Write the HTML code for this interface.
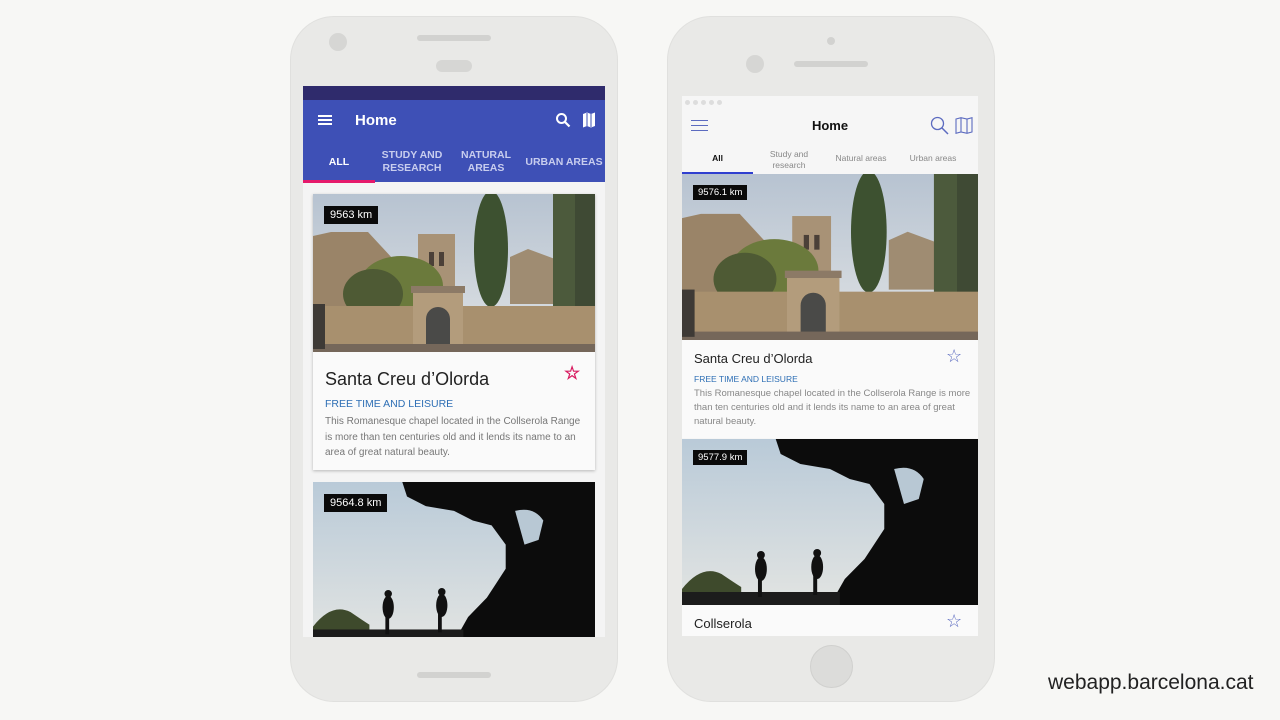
<!DOCTYPE html>
<html><head><meta charset="utf-8"><style>
*{margin:0;padding:0;box-sizing:border-box}
body{width:1280px;height:720px;background:#f7f7f5;position:relative;overflow:hidden;font-family:"Liberation Sans",sans-serif}
.abs{position:absolute}
.phone{position:absolute;background:#e9e9e7;border-radius:44px;border:1px solid #e0e0de}
svg.img{position:absolute;display:block}
.km{position:absolute;background:#0a0a0a;color:#fff;font-size:11px;padding:3px 6px}
.km2{position:absolute;background:#0a0a0a;color:#fff;font-size:9.5px;padding:2px 5px}
</style></head><body>
<svg width="0" height="0" style="position:absolute">
<defs>
<linearGradient id="sky" x1="0" y1="0" x2="0" y2="1"><stop offset="0" stop-color="#b7c3d1"/><stop offset="1" stop-color="#dfe2e4"/></linearGradient>
<linearGradient id="sky2" x1="0" y1="0" x2="0" y2="1"><stop offset="0" stop-color="#b9cad8"/><stop offset="1" stop-color="#e2e4e2"/></linearGradient>
<symbol id="chapel" viewBox="0 0 282 158" preserveAspectRatio="none">
<rect width="282" height="158" fill="url(#sky)"/>
<polygon points="0,42 18,38 55,38 80,65 80,158 0,158" fill="#9a8468"/>
<rect x="105" y="40" width="37" height="60" fill="#a89276"/>
<rect x="116" y="58" width="5" height="14" fill="#4b4038"/><rect x="126" y="58" width="5" height="14" fill="#4b4038"/>
<ellipse cx="88" cy="92" rx="42" ry="30" fill="#6b7a3c"/>
<ellipse cx="60" cy="100" rx="30" ry="25" fill="#4e5a34"/>
<ellipse cx="178" cy="55" rx="17" ry="58" fill="#3d5130"/>
<polygon points="197,63 215,55 242,65 242,110 197,110" fill="#9f8c72"/>
<rect x="240" y="0" width="42" height="158" fill="#4c5a3c"/>
<rect x="262" y="0" width="20" height="158" fill="#3f4a34"/>
<rect x="0" y="112" width="282" height="40" fill="#a8906e"/>
<rect x="100" y="95" width="50" height="60" fill="#b39c7c"/>
<rect x="98" y="92" width="54" height="7" fill="#8c7a66"/>
<path d="M113,155 V125 a12,12 0 0 1 24,0 V155Z" fill="#4a4a48"/>
<rect x="0" y="150" width="282" height="8" fill="#75675a"/>
<rect x="0" y="110" width="12" height="45" fill="#3e3a36"/>
</symbol>
<symbol id="bike" viewBox="0 0 300 166" preserveAspectRatio="none">
<rect width="300" height="166" fill="url(#sky2)"/>
<path d="M95,0 H300 V166 H150 L165,140 185,120 195,105 205,90 205,65 190,45 170,40 150,30 120,25 100,15Z" fill="#0c0c0c"/>
<path d="M215,30 Q235,25 245,40 L240,60 225,65 Z" fill="#b8c8d4"/>
<path d="M0,150 Q20,125 40,135 Q55,145 60,148 L60,166 H0Z" fill="#3e4a2c"/>
<rect x="0" y="153" width="160" height="13" fill="#1c1c1c"/>
<ellipse cx="80" cy="130" rx="6" ry="12" fill="#111"/><circle cx="80" cy="116" r="4" fill="#111"/>
<rect x="77" y="138" width="4" height="20" fill="#111"/>
<ellipse cx="137" cy="128" rx="6" ry="12" fill="#111"/><circle cx="137" cy="114" r="4" fill="#111"/>
<rect x="133" y="136" width="4" height="20" fill="#111"/>
</symbol>
</defs></svg>

<!-- Phone 1 -->
<div class="phone" style="left:290px;top:16px;width:328px;height:686px"></div>
<div class="abs" style="left:329px;top:33px;width:18px;height:18px;border-radius:50%;background:#d6d6d4"></div>
<div class="abs" style="left:417px;top:35px;width:74px;height:6px;border-radius:3px;background:#d2d2d0"></div>
<div class="abs" style="left:436px;top:60px;width:36px;height:12px;border-radius:6px;background:#d6d6d4"></div>
<div class="abs" style="left:417px;top:672px;width:74px;height:6px;border-radius:3px;background:#d2d2d0"></div>
<div class="abs" style="left:303px;top:86px;width:302px;height:551px;background:#f4f4f4;overflow:hidden">
  <div class="abs" style="left:0;top:0;width:302px;height:14px;background:#2f2b6c"></div>
  <div class="abs" style="left:0;top:14px;width:302px;height:82px;background:#3e50b6"></div>
  <div class="abs" style="left:15px;top:29px;width:14px;height:2px;background:#fff;box-shadow:0 4px #fff,0 8px #fff"></div>
  <div class="abs" style="left:52px;top:26px;color:#fff;font-size:15px;font-weight:bold">Home</div>
  <svg class="img" style="left:252px;top:26px" width="16" height="16" viewBox="0 0 16 16"><circle cx="6.5" cy="6.5" r="4.5" fill="none" stroke="#fff" stroke-width="2"/><path d="M10,10 L14.5,14.5" stroke="#fff" stroke-width="2.2"/></svg>
  <svg class="img" style="left:279px;top:26px" width="14" height="16" viewBox="0 0 14 16"><path d="M1,2 L5,0.5 9,2 13,0.5 V14 L9,15.5 5,14 1,15.5Z" fill="#fff"/><path d="M5,1 V14 M9,2 V15" stroke="#3e50b6" stroke-width="1"/></svg>
  <div class="abs" style="left:0;top:70px;width:72px;text-align:center;color:#fff;font-size:10.5px;font-weight:bold">ALL</div>
  <div class="abs" style="left:72px;top:63px;width:74px;text-align:center;color:#c8cdee;font-size:10.5px;font-weight:bold;line-height:13px">STUDY AND<br>RESEARCH</div>
  <div class="abs" style="left:146px;top:63px;width:74px;text-align:center;color:#c8cdee;font-size:10.5px;font-weight:bold;line-height:13px">NATURAL<br>AREAS</div>
  <div class="abs" style="left:220px;top:70px;width:82px;text-align:center;color:#c8cdee;font-size:10.5px;font-weight:bold">URBAN AREAS</div>
  <div class="abs" style="left:0;top:94px;width:72px;height:3px;background:#e5196b"></div>
  <div class="abs" style="left:10px;top:108px;width:282px;height:276px;background:#fafafa;box-shadow:0 1px 3px rgba(0,0,0,.25)">
    <svg class="img" style="left:0;top:0" width="282" height="158"><use href="#chapel"/></svg>
    <div class="km" style="left:11px;top:12px">9563 km</div>
    <div class="abs" style="left:12px;top:175px;font-size:18px;color:#222">Santa Creu d’Olorda</div>
    <div class="abs" style="left:251px;top:169px;color:#d81b60;font-size:18px;font-weight:bold">☆</div>
    <div class="abs" style="left:12px;top:204px;font-size:10.5px;color:#2e6fb5">FREE TIME AND LEISURE</div>
    <div class="abs" style="left:12px;top:220px;width:262px;font-size:10px;line-height:15.5px;color:#777">This Romanesque chapel located in the Collserola Range is more than ten centuries old and it lends its name to an area of great natural beauty.</div>
  </div>
  <div class="abs" style="left:10px;top:396px;width:282px;height:160px">
    <svg class="img" style="left:0;top:0" width="282" height="160"><use href="#bike"/></svg>
    <div class="km" style="left:11px;top:12px">9564.8 km</div>
  </div>
</div>

<!-- Phone 2 -->
<div class="phone" style="left:667px;top:16px;width:328px;height:686px"></div>
<div class="abs" style="left:827px;top:37px;width:8px;height:8px;border-radius:50%;background:#d2d2d0"></div>
<div class="abs" style="left:746px;top:55px;width:18px;height:18px;border-radius:50%;background:#d6d6d4"></div>
<div class="abs" style="left:794px;top:61px;width:74px;height:6px;border-radius:3px;background:#d2d2d0"></div>
<div class="abs" style="left:810px;top:645px;width:43px;height:43px;border-radius:50%;background:#dcdcda;border:1px solid #d0d0ce"></div>
<div class="abs" style="left:682px;top:96px;width:296px;height:540px;background:#f6f6f6;overflow:hidden">
  <div class="abs" style="left:3px;top:4px;width:5px;height:5px;border-radius:50%;background:#ddd;box-shadow:8px 0 #ddd,16px 0 #ddd,24px 0 #ddd,32px 0 #ddd"></div>
  <div class="abs" style="left:9px;top:24px;width:17px;height:1px;background:#5c6bc0;box-shadow:0 5px #5c6bc0,0 10px #5c6bc0"></div>
  <div class="abs" style="left:0;top:22px;width:296px;text-align:center;font-size:13px;font-weight:bold;color:#111">Home</div>
  <svg class="img" style="left:248px;top:20px" width="19" height="19" viewBox="0 0 19 19"><circle cx="7.5" cy="7.5" r="6" fill="none" stroke="#5c6bc0" stroke-width="1.3"/><path d="M12,12 L18,18" stroke="#5c6bc0" stroke-width="1.5"/></svg>
  <svg class="img" style="left:273px;top:21px" width="18" height="17" viewBox="0 0 18 17"><path d="M1,2 L6,0.7 12,2 17,0.7 V15 L12,16.3 6,15 1,16.3Z M6,1 V15 M12,2 V16" fill="none" stroke="#5c6bc0" stroke-width="1.1"/></svg>
  <div class="abs" style="left:0;top:57px;width:71px;text-align:center;font-size:8.5px;color:#111;font-weight:bold">All</div>
  <div class="abs" style="left:71px;top:53px;width:72px;text-align:center;font-size:8.5px;color:#888;line-height:10.5px">Study and<br>research</div>
  <div class="abs" style="left:143px;top:57px;width:72px;text-align:center;font-size:8.5px;color:#888">Natural areas</div>
  <div class="abs" style="left:215px;top:57px;width:72px;text-align:center;font-size:8.5px;color:#888">Urban areas</div>
  <div class="abs" style="left:0;top:76px;width:71px;height:2px;background:#2f3fd0"></div>
  <svg class="img" style="left:0;top:78px" width="296" height="166"><use href="#chapel"/></svg>
  <div class="km2" style="left:11px;top:89px">9576.1 km</div>
  <div class="abs" style="left:0;top:244px;width:296px;height:98px;background:#fafafa">
    <div class="abs" style="left:12px;top:11px;font-size:13px;color:#222">Santa Creu d’Olorda</div>
    <div class="abs" style="left:264px;top:6px;color:#5c6bc0;font-size:18px">☆</div>
    <div class="abs" style="left:12px;top:34px;font-size:8.5px;color:#2e6fb5">FREE TIME AND LEISURE</div>
    <div class="abs" style="left:12px;top:47px;width:278px;font-size:9.5px;line-height:14px;color:#888">This Romanesque chapel located in the Collserola Range is more than ten centuries old and it lends its name to an area of great natural beauty.</div>
  </div>
  <svg class="img" style="left:0;top:343px" width="296" height="166"><use href="#bike"/></svg>
  <div class="km2" style="left:11px;top:354px">9577.9 km</div>
  <div class="abs" style="left:0;top:509px;width:296px;height:40px;background:#fafafa">
    <div class="abs" style="left:12px;top:11px;font-size:13px;color:#222">Collserola</div>
    <div class="abs" style="left:264px;top:6px;color:#5c6bc0;font-size:18px">☆</div>
  </div>
</div>

<div class="abs" style="left:1048px;top:671px;font-size:21px;color:#222">webapp.barcelona.cat</div>
</body></html>
